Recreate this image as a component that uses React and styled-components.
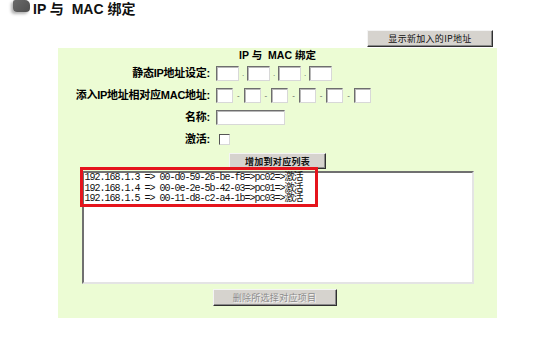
import React from "react";
import styled, { createGlobalStyle } from "styled-components";

const GlobalStyle = createGlobalStyle`
  html, body {
    margin: 0;
    padding: 0;
    background: #ffffff;
  }
  body {
    font-family: "Liberation Sans", "Noto Sans CJK SC", sans-serif;
    color: #000;
  }
`;

const Page = styled.div`
  width: 554px;
  height: 341px;
  overflow: hidden;
`;

const Header = styled.div`
  display: flex;
  align-items: flex-start;
  gap: 3px;
  padding-left: 13px;
  height: 16px;
`;

const Bullet = styled.span`
  width: 17px;
  height: 12px;
  border-radius: 2px 5px 4px 4px;
  background: linear-gradient(135deg, #6a6a6a, #4f4f4f);
  box-shadow: -2px 2px 3px rgba(0, 0, 0, 0.3);
`;

const HeaderTitle = styled.h1`
  margin: 2px 0 0;
  font-size: 14px;
  line-height: 14px;
  font-weight: bold;
  color: #111;
`;

const Content = styled.div`
  margin: 14px 0 0 58px;
  width: 439px;
`;

const TopBar = styled.div`
  display: flex;
  justify-content: flex-end;
  padding-right: 4px;
  margin-bottom: 1px;
`;

const Button = styled.button`
  box-sizing: border-box;
  width: ${(p) => p.w}px;
  height: ${(p) => p.h || 17}px;
  padding: 0;
  background: #d6d3ce;
  border: 1px solid;
  border-color: #f4f4f4 #303030 #303030 #f4f4f4;
  box-shadow: inset -1px -1px 0 #8a8a8a;
  font-family: "Noto Sans CJK SC", "Liberation Sans", sans-serif;
  font-size: 9px;
  font-weight: ${(p) => (p.bold ? "bold" : "normal")};
  letter-spacing: 0.3px;
  color: ${(p) => (p.disabled ? "#8c8c8c" : "#111")};
  text-shadow: ${(p) => (p.disabled ? "1px 1px 0 #f4f4f4" : "none")};
  line-height: 1;
`;

const Panel = styled.div`
  box-sizing: border-box;
  height: 270px;
  background: #ecfcd4;
  padding-top: 1px;
  display: flex;
  flex-direction: column;
  align-items: center;
`;

const PanelTitle = styled.div`
  font-size: 10.5px;
  line-height: 12px;
  font-weight: bold;
`;

const Form = styled.div`
  align-self: stretch;
  margin-top: 5px;
  display: grid;
  grid-template-columns: 152px auto;
  grid-auto-rows: 15px;
  column-gap: 6px;
  row-gap: 7px;
`;

const Label = styled.div`
  text-align: right;
  font-size: 11px;
  line-height: 15px;
  font-weight: bold;
  letter-spacing: -0.25px;
  white-space: nowrap;
`;

const Field = styled.div`
  display: flex;
  align-items: center;
`;

const Box = styled.input`
  box-sizing: border-box;
  width: ${(p) => p.w}px;
  height: 15px;
  margin: 0;
  padding: 0;
  background: #fff;
  border: 1px solid;
  border-color: #6e6e6e #d8d8d8 #d8d8d8 #6e6e6e;
  box-shadow: inset 1px 1px 0 #b8b8b8;
`;

const Sep = styled.span`
  width: ${(p) => p.w}px;
  text-align: center;
  font-size: 8px;
  line-height: 15px;
  color: #555;
  align-self: ${(p) => (p.low ? "flex-end" : "center")};
`;

const Check = styled.span`
  box-sizing: border-box;
  display: block;
  width: 11px;
  height: 11px;
  margin-left: 3px;
  background: #fff;
  border: 1px solid;
  border-color: #555 #d8d8d8 #d8d8d8 #555;
`;

const AddButton = styled(Button)`
  margin-top: 6px;
`;

const ListWrap = styled.div`
  position: relative;
  margin-top: 2px;
`;

const ListBox = styled.div`
  box-sizing: border-box;
  width: 392px;
  height: 113px;
  background: #fff;
  border: 2px solid;
  border-color: #707070 #e4e4e4 #e4e4e4 #707070;
  padding: 0 0 0 1px;
  font-family: "Liberation Mono", "Noto Sans CJK SC", monospace;
  font-size: 10px;
  letter-spacing: -1px;
  line-height: 10.5px;
  color: #111;
  white-space: pre;
`;

const Highlight = styled.div`
  position: absolute;
  left: -2px;
  top: -4px;
  width: 238px;
  height: 40px;
  box-sizing: border-box;
  border: 3px solid #e5141c;
  pointer-events: none;
`;

const DeleteButton = styled(Button)`
  margin-top: 5px;
  margin-right: 6px;
`;

const entries = [
  "192.168.1.3 => 00-d0-59-26-be-f8=>pc02=>激活",
  "192.168.1.4 => 00-0e-2e-5b-42-03=>pc01=>激活",
  "192.168.1.5 => 00-11-d8-c2-a4-1b=>pc03=>激活",
];

const IpField = () => (
  <Field>
    {[0, 1, 2, 3].map((i) => (
      <React.Fragment key={i}>
        {i > 0 && (
          <Sep w={8} low>
            .
          </Sep>
        )}
        <Box w={23} />
      </React.Fragment>
    ))}
  </Field>
);

const MacField = () => (
  <Field>
    {[0, 1, 2, 3, 4, 5].map((i) => (
      <React.Fragment key={i}>
        {i > 0 && <Sep w={10.6}>-</Sep>}
        <Box w={17} />
      </React.Fragment>
    ))}
  </Field>
);

export default function App() {
  return (
    <Page>
      <GlobalStyle />
      <Header>
        <Bullet />
        <HeaderTitle>IP 与&nbsp; MAC 绑定</HeaderTitle>
      </Header>
      <Content>
        <TopBar>
          <Button w={126}>显示新加入的IP地址</Button>
        </TopBar>
        <Panel>
          <PanelTitle>IP 与&nbsp; MAC 绑定</PanelTitle>
          <Form>
            <Label>静态IP地址设定:</Label>
            <IpField />
            <Label>添入IP地址相对应MAC地址:</Label>
            <MacField />
            <Label>名称:</Label>
            <Field>
              <Box w={69} />
            </Field>
            <Label>激活:</Label>
            <Field>
              <Check />
            </Field>
          </Form>
          <AddButton w={97} h={16} bold>
            增加到对应列表
          </AddButton>
          <ListWrap>
            <ListBox>
              {entries.map((e, i) => (
                <div key={i}>{e}</div>
              ))}
            </ListBox>
            <Highlight />
          </ListWrap>
          <DeleteButton w={124} disabled>
            删除所选择对应项目
          </DeleteButton>
        </Panel>
      </Content>
    </Page>
  );
}
